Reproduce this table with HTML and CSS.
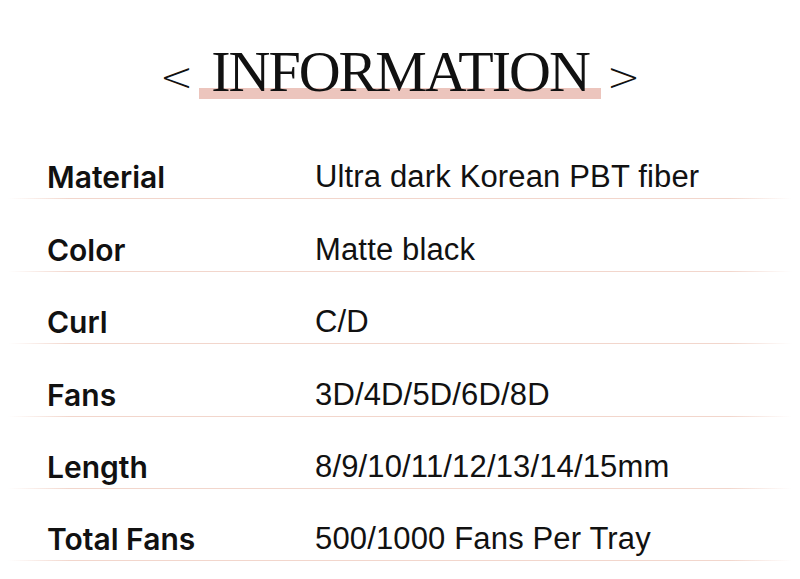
FILE: index.html
```html
<!DOCTYPE html>
<html>
<head>
<meta charset="utf-8">
<link rel="stylesheet" href="styles.css">
</head>
<body>
<div class="page">
  <div class="header">
    <h1 class="title"><span class="arrow">&lt;</span><span class="word">INFORMATION</span><span class="arrow">&gt;</span></h1>
  </div>
  <div class="table">
    <div class="row"><div class="label">Material</div><div class="value">Ultra dark Korean PBT fiber</div></div>
    <div class="row"><div class="label">Color</div><div class="value">Matte black</div></div>
    <div class="row"><div class="label">Curl</div><div class="value">C/D</div></div>
    <div class="row"><div class="label">Fans</div><div class="value">3D/4D/5D/6D/8D</div></div>
    <div class="row"><div class="label">Length</div><div class="value">8/9/10/11/12/13/14/15mm</div></div>
    <div class="row"><div class="label">Total Fans</div><div class="value">500/1000 Fans Per Tray</div></div>
  </div>
</div>
</body>
</html>
```

FILE: styles.css
```css
html, body {
  margin: 0;
  padding: 0;
  background: #ffffff;
}
.page {
  width: 800px;
  height: 579px;
  overflow: hidden;
  color: #111111;
}
.header {
  height: 127px;
  display: flex;
  justify-content: center;
}
.title {
  margin: 0;
  padding-top: 39px;
  font-family: "Liberation Serif", "Times New Roman", serif;
  font-weight: 400;
  font-size: 58px;
  line-height: 66px;
  display: flex;
  align-items: baseline;
  gap: 18px;
}
.arrow {
  font-family: "DejaVu Sans", sans-serif;
  font-weight: 200;
  font-size: 40px;
}
.word {
  position: relative;
  letter-spacing: -2px;
  z-index: 1;
}
.word::after {
  content: "";
  position: absolute;
  left: -12px;
  right: -12px;
  bottom: 6px;
  height: 11px;
  background: #ecc5bd;
  z-index: -1;
}
.table {
  display: flex;
  flex-direction: column;
}
.row {
  height: 72.4px;
  box-sizing: border-box;
  display: flex;
  align-items: flex-end;
  padding-left: 47px;
  padding-bottom: 4px;
  position: relative;
}
.row::after {
  content: "";
  position: absolute;
  left: 8px;
  right: 8px;
  bottom: 0;
  height: 1px;
  background: linear-gradient(to right, rgba(242,214,204,0), #f2d6cc 8%, #f2d6cc 92%, rgba(242,214,204,0));
}
.label {
  width: 268px;
  font-family: "Inter", "Liberation Sans", sans-serif;
  font-weight: 600;
  font-size: 30px;
  line-height: 36px;
}
.value {
  font-family: "Liberation Sans", Arial, sans-serif;
  font-weight: 400;
  font-size: 31px;
  line-height: 36px;
  letter-spacing: 0.15px;
}
```
